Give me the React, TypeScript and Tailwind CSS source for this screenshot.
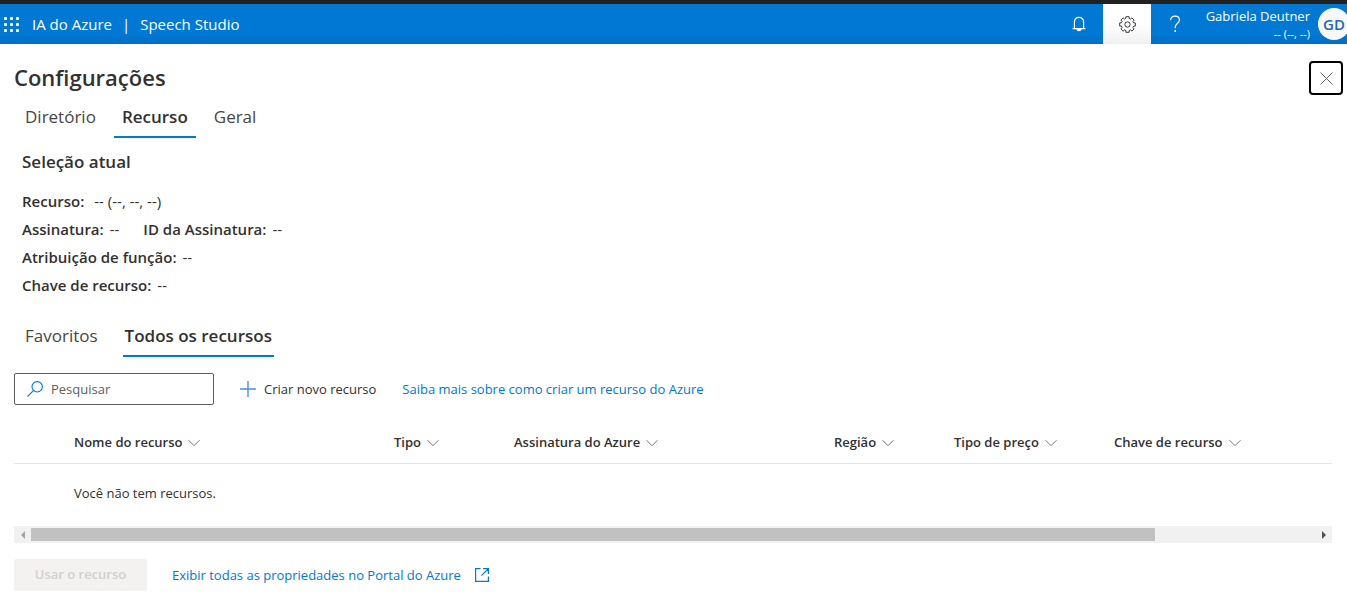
import { useState } from "react";

const FONT = "font-['Open_Sans','Noto_Sans',sans-serif]";

function GearIcon() {
  const count = 8;
  const points: string[] = [];
  const step = (Math.PI * 2) / count;
  for (let i = 0; i < count; i++) {
    const a = i * step;
    const ring: [number, number][] = [
      [-0.26, 5.9],
      [-0.2, 7.5],
      [0.2, 7.5],
      [0.26, 5.9],
    ];
    ring.forEach(([da, r]) => {
      points.push(`${(8 + r * Math.cos(a + da)).toFixed(2)},${(8 + r * Math.sin(a + da)).toFixed(2)}`);
    });
  }
  return (
    <svg viewBox="0 0 16 16" className="size-[17px]" fill="none" stroke="#333" strokeWidth="0.9" aria-hidden="true">
      <polygon points={points.join(" ")} strokeLinejoin="round" />
      <circle cx="8" cy="8" r="2.5" />
    </svg>
  );
}

function ChevronDown() {
  return (
    <svg viewBox="0 0 12 12" className="size-3 shrink-0" fill="none" stroke="#777" strokeWidth="1" aria-hidden="true">
      <path d="M0.5 3.2 6 8.7l5.5-5.5" />
    </svg>
  );
}

function TopBar() {
  return (
    <header className="flex h-11 items-stretch border-t-4 border-[#212121] bg-[#0078d4] bg-linear-to-b from-[#0078d4] from-75% to-[#006fc4] text-white">
      <button type="button" aria-label="Aplicativos" className="flex w-8 items-center pt-0.5 pl-1">
        <svg viewBox="0 0 16 16" className="size-4" fill="#fff" aria-hidden="true">
          {[0, 6, 12].map((y) =>
            [0, 6, 12].map((x) => <rect key={`${x}-${y}`} x={x} y={y} width="3" height="3" rx="0.9" />),
          )}
        </svg>
      </button>
      <nav className="flex items-center gap-2.5 text-[15px]">
        <a href="#azure">IA do Azure</a>
        <span>|</span>
        <a href="#studio">Speech Studio</a>
      </nav>
      <div className="ml-auto flex items-stretch">
        <button type="button" aria-label="Notificações" className="flex w-12 items-center justify-center">
          <svg viewBox="0 0 16 16" className="size-4" fill="none" stroke="#fff" strokeWidth="1.2" aria-hidden="true">
            <path d="M3.4 12.6V6.2C3.4 3.2 5.3 1.3 8 1.3s4.6 1.9 4.6 4.9v6.4M1.6 12.6h12.8" />
            <path d="M6 12.8c0 1 .9 1.8 2 1.8s2-.8 2-1.8z" fill="#fff" />
          </svg>
        </button>
        <button
          type="button"
          aria-label="Configurações"
          className="flex w-12 items-center justify-center bg-linear-to-b from-white from-50% to-[#f0f0f0]"
        >
          <GearIcon />
        </button>
        <button type="button" aria-label="Ajuda" className="flex w-12 items-center justify-center">
          <svg viewBox="0 0 12 18" className="h-[18px] w-3" fill="none" stroke="#fff" strokeWidth="1.2" aria-hidden="true">
            <path d="M1.6 5.2C1.6 2.8 3.4 1.2 6 1.2s4.4 1.5 4.4 3.8c0 3.4-4.2 3.7-4.2 7.2v1" />
            <circle cx="6.2" cy="16" r="0.9" fill="#fff" stroke="none" />
          </svg>
        </button>
        <button type="button" className="flex items-center gap-2">
          <span className="flex w-[111px] flex-col items-end">
            <span className="text-[13px] leading-5 whitespace-nowrap">Gabriela Deutner</span>
            <span className="text-[11px] leading-4">-- (--, --)</span>
          </span>
          <span className="-mr-[3px] flex size-8 items-center justify-center rounded-full bg-[#f8f8f8] text-[15px] font-semibold text-[#2468b8]">
            GD
          </span>
        </button>
      </div>
    </header>
  );
}

interface TabsProps {
  items: string[];
  initial: string;
  label: string;
  gap: string;
  activePadding: string;
}

function Tabs({ items, initial, label, gap, activePadding }: TabsProps) {
  const [active, setActive] = useState(initial);
  return (
    <div role="tablist" aria-label={label} className={`flex ${gap}`}>
      {items.map((item) => (
        <button
          key={item}
          type="button"
          role="tab"
          aria-selected={item === active}
          onClick={() => setActive(item)}
          className={`h-11 border-b-2 pt-[3px] text-[17px] ${
            item === active ? `border-[#0078d4] font-semibold ${activePadding}` : "border-transparent font-normal text-[#484644]"
          }`}
        >
          {item}
        </button>
      ))}
    </div>
  );
}

function Field({ name, value, gap = "gap-1.5" }: { name: string; value: string; gap?: string }) {
  return (
    <div className={`flex ${gap}`}>
      <dt className="font-semibold">{name}:</dt>
      <dd>{value}</dd>
    </div>
  );
}

const columns = [
  { name: "Nome do recurso", width: "w-80" },
  { name: "Tipo", width: "w-[120px]" },
  { name: "Assinatura do Azure", width: "w-80" },
  { name: "Região", width: "w-[120px]" },
  { name: "Tipo de preço", width: "w-40" },
  { name: "Chave de recurso", width: "w-[430px]" },
];

function ResourceTable() {
  return (
    <div className="mt-4">
      <div className="overflow-x-hidden">
        <table className="w-[1530px] table-fixed border-collapse text-left text-[13px]">
          <thead>
            <tr className="h-[42px] border-b border-[#e5e5e5]">
              <th className="w-[60px]" aria-label="Favorito" />
              {columns.map((c) => (
                <th key={c.name} scope="col" className={`${c.width} pt-0.5 font-semibold`}>
                  <button type="button" className="flex items-center gap-1.5 whitespace-nowrap">
                    {c.name}
                    <ChevronDown />
                  </button>
                </th>
              ))}
            </tr>
          </thead>
          <tbody>
            <tr className="h-[63px]">
              <td />
              <td colSpan={6} className="pb-0.5">
                Você não tem recursos.
              </td>
            </tr>
          </tbody>
        </table>
      </div>
      <div className="flex h-[17px] items-center bg-[#f1f1f1]" aria-hidden="true">
        <div className="flex w-[17px] justify-center">
          <svg viewBox="0 0 4 8" className="h-2 w-1" fill="#a3a3a3">
            <path d="M4 0v8L0 4z" />
          </svg>
        </div>
        <div className="flex-1">
          <div className="h-[13px] w-7/8 bg-[#c1c1c1]" />
        </div>
        <div className="flex w-[17px] justify-center">
          <svg viewBox="0 0 4 8" className="h-2 w-1" fill="#505050">
            <path d="M0 0v8l4-4z" />
          </svg>
        </div>
      </div>
    </div>
  );
}

export default function App() {
  return (
    <div className={`min-h-screen bg-white text-[#323130] ${FONT}`}>
      <TopBar />
      <main className="pr-[15px] pl-3.5">
        <div className="flex items-start justify-between pt-[17px]">
          <h1 className="text-[22px] leading-8 font-semibold">Configurações</h1>
          <button
            type="button"
            aria-label="Fechar"
            className="-mr-[11px] flex size-[34px] items-center justify-center rounded-sm border-2 border-black"
          >
            <svg viewBox="0 0 13 13" className="size-[13px]" fill="none" stroke="#666" strokeWidth="1" aria-hidden="true">
              <path d="M.5.5l12 12M12.5.5l-12 12" />
            </svg>
          </button>
        </div>
        <div className="-mt-px pl-[11px]">
          <Tabs
            items={["Diretório", "Recurso", "Geral"]}
            initial="Recurso"
            label="Configurações"
            gap="gap-[18px]"
            activePadding="px-2"
          />
        </div>
        <section className="pt-3 pl-2">
          <h2 className="text-[17px] leading-6 font-semibold">Seleção atual</h2>
          <dl className="mt-[13px] text-[15px] leading-7">
            <Field name="Recurso" value="-- (--, --, --)" gap="gap-2.5" />
            <div className="flex gap-6">
              <Field name="Assinatura" value="--" />
              <Field name="ID da Assinatura" value="--" />
            </div>
            <Field name="Atribuição de função" value="--" />
            <Field name="Chave de recurso" value="--" />
          </dl>
        </section>
        <div className="mt-3.5 pl-[11px]">
          <Tabs
            items={["Favoritos", "Todos os recursos"]}
            initial="Todos os recursos"
            label="Recursos"
            gap="gap-[25px]"
            activePadding="px-0.5"
          />
        </div>
        <div className="mt-4 flex items-center gap-[26px] text-[13px]">
          <label className="flex h-8 w-50 items-center gap-2 rounded-xs border border-[#605e5c] px-3">
            <svg viewBox="0 0 16 16" className="size-4 shrink-0" fill="none" stroke="#0078d4" strokeWidth="1.1" aria-hidden="true">
              <circle cx="10.2" cy="5.8" r="5.2" />
              <path d="M6.4 9.6.4 15.6" />
            </svg>
            <input
              type="text"
              aria-label="Pesquisar"
              placeholder="Pesquisar"
              className="w-full min-w-0 bg-transparent pt-0.5 outline-none placeholder:text-[#605e5c]"
            />
          </label>
          <button type="button" className="flex items-center gap-2">
            <svg viewBox="0 0 16 16" className="size-4" fill="none" stroke="#4a90e2" strokeWidth="1.4" aria-hidden="true">
              <path d="M8 0v16M0 8h16" />
            </svg>
            <span className="pt-0.5">Criar novo recurso</span>
          </button>
          <a href="#saiba-mais" className="pt-0.5 text-[#0078d4]">
            Saiba mais sobre como criar um recurso do Azure
          </a>
        </div>
        <ResourceTable />
        <div className="mt-4 flex items-center gap-[25px] text-[13px]">
          <button type="button" disabled className="h-8 w-[133px] rounded-xs bg-[#f3f2f1] font-semibold text-[#d2d0ce]">
            Usar o recurso
          </button>
          <a href="#portal" className="flex items-center gap-3.5 text-[#0078d4]">
            <span className="pt-0.5">Exibir todas as propriedades no Portal do Azure</span>
            <svg viewBox="0 0 14 14" className="size-3.5" fill="none" stroke="#0078d4" strokeWidth="1.2" aria-hidden="true">
              <path d="M5.5.6H.6v12.8h12.8V8.5M8 .6h5.4V6M13.4.6 6.4 7.6" />
            </svg>
          </a>
        </div>
      </main>
    </div>
  );
}
